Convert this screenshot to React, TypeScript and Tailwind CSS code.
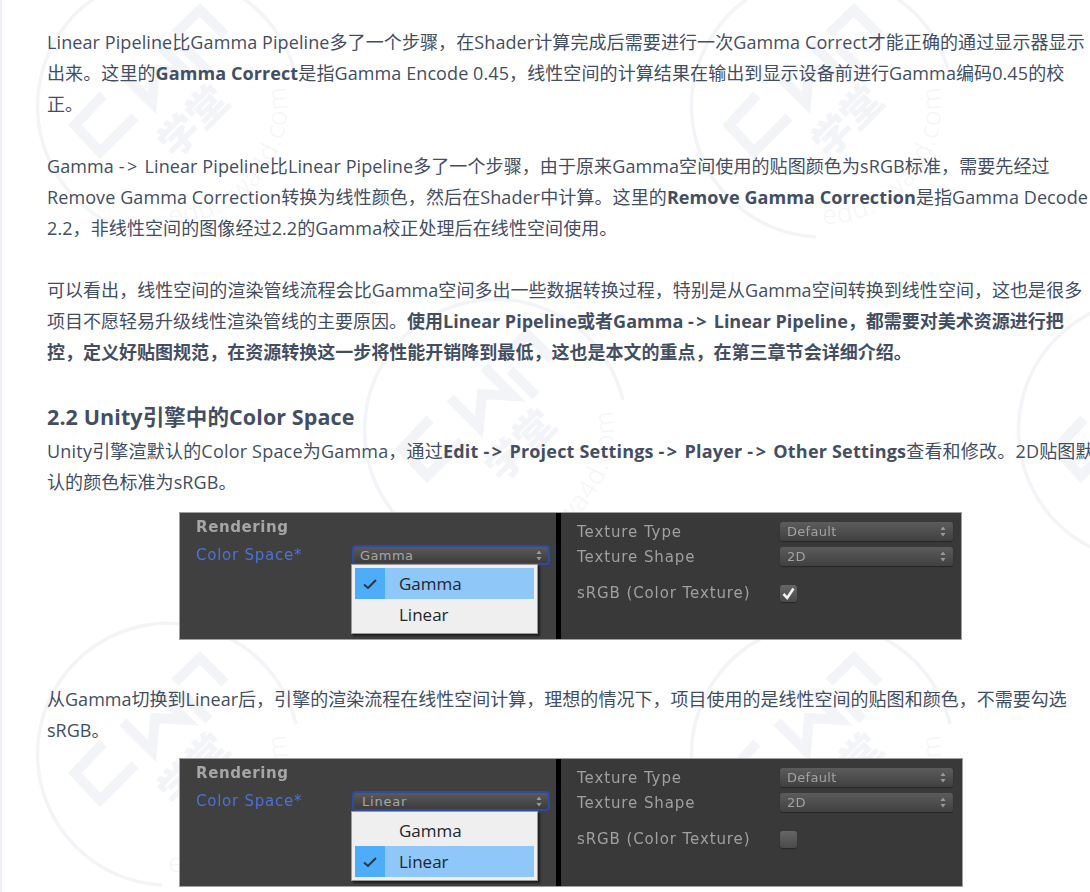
import React from "react";

const centers: [number, number][] = [
  [169, 106],
  [823, 106],
  [496, 430],
  [1150, 430],
  [169, 754],
  [823, 754],
];

function Mark({ x, y, id }: { x: number; y: number; id: string }) {
  return (
    <g transform={`translate(${x} ${y})`}>
      <path d="M 127 -30 A 131 131 0 1 0 -7 131" fill="none" stroke="#f3f4f8" strokeWidth="3.5" />
      <g fill="none" stroke="#f3f4f8" strokeWidth="10" strokeLinejoin="miter">
        <polyline points="-66,-11 -94,19 -69,46 -34,11" />
        <polyline points="-46,-32 -17,-3 -14,-36 17,-34 -12,-63" />
        <polyline points="6,-72 31,-96 56,-71" />
        <polyline points="14,-60 40,-34" />
      </g>
      <text
        x="23"
        y="30"
        textAnchor="middle"
        transform="rotate(-45 23 14)"
        fontFamily="'Noto Sans CJK SC', sans-serif"
        fontWeight="900"
        fontSize="40"
        fill="#f3f4f8"
      >
        学堂
      </text>
      <path id={id} d="M 0 118 A 118 118 0 0 0 111 -40" fill="none" />
      <text fontFamily="'Open Sans', sans-serif" fontSize="26" fontWeight="300" fill="#f4f5f8" letterSpacing="1.5">
        <textPath href={`#${id}`}>edu.uwa4d.com</textPath>
      </text>
    </g>
  );
}

function Watermarks() {
  return (
    <svg className="absolute left-0 top-0 h-[892px] w-[1090px]" viewBox="0 0 1090 892" aria-hidden="true">
      {centers.map(([x, y], i) => (
        <Mark key={i} x={x} y={y} id={`wm${i}`} />
      ))}
    </svg>
  );
}

function Updown() {
  return (
    <svg width="6" height="11" viewBox="0 0 6 11" className="shrink-0">
      <path d="M3 0.5 L5.5 4 H0.5 Z M3 10.5 L0.5 7 H5.5 Z" fill="#9a9a9a" />
    </svg>
  );
}

function Combo({ label }: { label: string }) {
  return (
    <div className="flex h-[19px] w-[173px] items-center justify-between rounded-[3px] bg-gradient-to-b from-[#5c5c5c] to-[#404040] pl-[7px] pr-[7px] text-[13px] tracking-[0.3px] text-[#a2a2a2] shadow-[0_1px_1px_#262626]">
      <span>{label}</span>
      <Updown />
    </div>
  );
}

function Row({ label, on }: { label: string; on: boolean }) {
  return (
    <div className="flex h-[31px] items-center">
      <div className="w-[30px] self-stretch">
        {on && (
          <div className="flex h-full items-center justify-center bg-[#4dadfb]">
            <svg width="16" height="12" viewBox="0 0 16 12">
              <path d="M2 6.5 L6 10 L14 2" fill="none" stroke="#2c3440" strokeWidth="2" />
            </svg>
          </div>
        )}
      </div>
      <span className="pl-[14px] font-['Open_Sans',sans-serif] text-[17px] tracking-normal text-[#22262c]">{label}</span>
    </div>
  );
}

function Panel({ active, srgb, box, menu }: { active: "Gamma" | "Linear"; srgb: boolean; box: string; menu: string }) {
  return (
    <div className={`${box} flex border border-[#a0a0a0] font-['DejaVu_Sans',sans-serif] tracking-normal`}>
      <div className="relative w-[376px] bg-[#404040] pl-[16px] pt-[4px]">
        <div className="text-[15px] font-bold leading-[20px] tracking-[0.6px] text-[#a6a6a6] blur-[0.4px]">Rendering</div>
        <div className="mt-[8px] flex items-center">
          <div className="w-[156px] text-[15px] leading-[20px] tracking-[0.75px] text-[#4a72d8] blur-[0.3px]">Color Space*</div>
          <div className="flex h-[20px] w-[198px] items-center justify-between rounded-[4px] border-2 border-[#2c4ba6] bg-gradient-to-b from-[#5a5a5a] to-[#3c3c3c] pl-[6px] pr-[6px] text-[13px] tracking-[0.4px] text-[#a6a6a6]">
            <span className={active === "Linear" ? "pl-[2px] tracking-[0.8px]" : ""}>{active}</span>
            <Updown />
          </div>
        </div>
        <div className={`absolute left-[171px] ${menu} w-[187px] border border-[#9a9a9a] bg-[#efefef] p-[3px] shadow-[2px_2px_2px_rgba(0,0,0,0.55)]`}>
          <div className={active === "Gamma" ? "bg-[#8fc7f8]" : ""}>
            <Row label="Gamma" on={active === "Gamma"} />
          </div>
          <div className={active === "Linear" ? "bg-[#8fc7f8]" : ""}>
            <Row label="Linear" on={active === "Linear"} />
          </div>
        </div>
      </div>
      <div className="w-[5px] bg-black" />
      <div className="flex-1 bg-[#393939] pl-[16px] pt-[9px] text-[15px] tracking-[0.9px] text-[#a0a0a0] blur-[0.3px]">
        <div className="flex h-[19px] items-center">
          <div className="w-[203px] pt-[1px]">Texture Type</div>
          <Combo label="Default" />
        </div>
        <div className="mt-[6px] flex h-[19px] items-center">
          <div className="w-[203px] pt-[1px]">Texture Shape</div>
          <Combo label="2D" />
        </div>
        <div className="mt-[18px] flex h-[18px] items-center">
          <div className="w-[203px] pt-[1px]">sRGB (Color Texture)</div>
          <div className="flex h-[17px] w-[17px] items-center justify-center rounded-[3px] bg-gradient-to-b from-[#666666] to-[#4a4a4a] shadow-[0_1px_1px_#262626]">
            {srgb && (
              <svg width="15" height="15" viewBox="0 0 15 15">
                <path d="M2.5 8 L6.2 12 L12.5 2.5" fill="none" stroke="#f2f2f2" strokeWidth="2.6" />
              </svg>
            )}
          </div>
        </div>
      </div>
    </div>
  );
}

const B = ({ children }: { children: React.ReactNode }) => <strong className="font-bold">{children}</strong>;
const Arrow = () => <span className="tracking-[2.5px]">-&gt;</span>;

export default function App() {
  return (
    <div className="relative h-[892px] w-[1090px] overflow-hidden border-l-2 border-[#eff0f7] bg-white font-['Open_Sans','Noto_Sans_CJK_SC',sans-serif] text-[18px] leading-[31px] tracking-[0.095px] text-[#434e63]">
      <div className="absolute left-[-2px] top-0"><Watermarks /></div>
      <div className="relative w-[1047px] whitespace-nowrap pl-[45px] pt-[27px]">
        <p>Linear Pipeline比Gamma Pipeline多了一个步骤，在Shader计算完成后需要进行一次Gamma Correct才能正确的通过显示器显示</p>
        <p>出来。这里的<B>Gamma Correct</B>是指Gamma Encode 0.45，线性空间的计算结果在输出到显示设备前进行Gamma编码0.45的校</p>
        <p>正。</p>
        <p className="mt-[31px]">Gamma <Arrow /> Linear Pipeline比Linear Pipeline多了一个步骤，由于原来Gamma空间使用的贴图颜色为sRGB标准，需要先经过</p>
        <p>Remove Gamma Correction转换为线性颜色，然后在Shader中计算。这里的<B>Remove Gamma Correction</B>是指Gamma Decode</p>
        <p>2.2，非线性空间的图像经过2.2的Gamma校正处理后在线性空间使用。</p>
        <p className="mt-[31px] tracking-[0.04px]">可以看出，线性空间的渲染管线流程会比Gamma空间多出一些数据转换过程，特别是从Gamma空间转换到线性空间，这也是很多</p>
        <p className="tracking-normal"><span>项目不愿轻易升级线性渲染管线的主要原因。</span><B>使用Linear Pipeline或者Gamma <Arrow /> Linear Pipeline，都需要对美术资源进行把</B></p>
        <p className="tracking-[0.015px]"><B>控，定义好贴图规范，在资源转换这一步将性能开销降到最低，这也是本文的重点，在第三章节会详细介绍。</B></p>
        <h3 className="mb-[4px] mt-[33px] text-[21.5px] font-bold leading-[31px]">2.2 Unity引擎中的Color Space</h3>
        <p className="tracking-[0.2px]">Unity引擎渲默认的Color Space为Gamma，通过<B>Edit <Arrow /> Project Settings <Arrow /> Player <Arrow /> Other Settings</B>查看和修改。2D贴图默</p>
        <p>认的颜色标准为sRGB。</p>
      </div>
      <div className="relative pl-[177px] pt-[14px]">
        <Panel active="Gamma" srgb={true} box="h-[128px] w-[783px]" menu="top-[51px]" />
      </div>
      <div className="relative mt-[44px] w-[1047px] whitespace-nowrap pl-[45px] tracking-[0.015px]">
        <p>从Gamma切换到Linear后，引擎的渲染流程在线性空间计算，理想的情况下，项目使用的是线性空间的贴图和颜色，不需要勾选</p>
        <p>sRGB。</p>
      </div>
      <div className="relative pl-[177px] pt-[12px]">
        <Panel active="Linear" srgb={false} box="h-[129px] w-[784px]" menu="top-[52px]" />
      </div>
    </div>
  );
}
